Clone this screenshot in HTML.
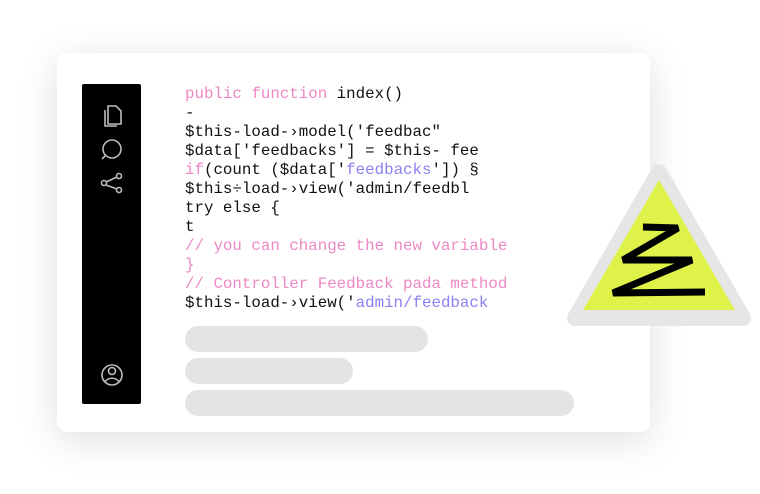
<!DOCTYPE html>
<html><head><style>
body{margin:0;width:760px;height:494px;background:#fff;position:relative;overflow:hidden;font-family:"Liberation Mono",monospace}
.card{position:absolute;left:57px;top:53px;width:593px;height:379px;background:#fff;border-radius:10px;box-shadow:0 8px 40px rgba(0,0,0,0.13)}
.side{position:absolute;left:82px;top:84px;width:59px;height:320px;background:#000;border-radius:2px}
.code{position:absolute;left:185px;top:85px;font-size:15.8px;line-height:19px;color:#111;white-space:pre;letter-spacing:0}
.p{color:#ee88c4}.b{color:#8a82f0}
.bar{position:absolute;left:185px;height:26px;border-radius:13px;background:#e4e4e4}
</style></head><body>
<div class="card"></div>
<div class="side"></div>
<svg style="position:absolute;left:82px;top:84px" width="59" height="320" fill="none" stroke="#bbb" stroke-width="1.6">
<path d="M26 22h8l5 5v13h-13z"/><path d="M23 26v16h12"/>
<circle cx="30" cy="65" r="9"/><path d="M24 71l-4 4"/>
<circle cx="22" cy="99" r="2.5"/><circle cx="37" cy="92" r="2.5"/><circle cx="37" cy="106" r="2.5"/><path d="M24 98l11-5M24 101l11 4"/>
<circle cx="30" cy="291" r="10"/><circle cx="30" cy="287" r="3.5"/><path d="M23 298c3-5 11-5 14 0"/>
</svg>
<div class="code"><span class="p">public function</span> index()
-
$this-load-›model('feedbac"
$data['feedbacks'] = $this- fee
<span class="p">if</span>(count ($data['<span class="b">feedbacks</span>']) §
$this÷load-›view('admin/feedbl
try else {
t
<span class="p">// you can change the new variable
}
// Controller Feedback pada method</span>
$this-load-›view('<span class="b">admin/feedback</span></div>
<div class="bar" style="top:326px;width:243px"></div>
<div class="bar" style="top:358px;width:168px"></div>
<div class="bar" style="top:390px;width:389px"></div>
<svg style="position:absolute;left:0;top:0" width="760" height="494">
<path d="M659 172 L743 318 L575 318 Z" fill="#e6e6e6" stroke="#e6e6e6" stroke-width="16" stroke-linejoin="round"/>
<path d="M659 180 L735 310 L583 310 Z" fill="#def24a"/>
<path d="M643 227 L678 228 L623 260 L692 260 L613 293 L705 292" fill="none" stroke="#000" stroke-width="7" stroke-linejoin="bevel"/>
</svg>
</body></html>
